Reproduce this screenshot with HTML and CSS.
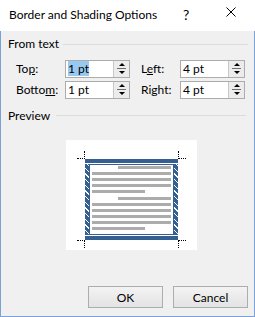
FILE: index.html
```html
<!doctype html>
<html lang="en">
  <head>
    <meta charset="UTF-8" />
    <title>Border and Shading Options</title>
    <link rel="stylesheet" href="styles.css">
  </head>
  <body>
    <div class="window">
      <div class="titlebar">
        <span class="title">Border and Shading Options</span>
        <span class="help">?</span>
        <svg class="close" width="10" height="10" viewBox="0 0 10 10">
          <path d="M0.5 0.5 L9.5 9.5 M9.5 0.5 L0.5 9.5" stroke="#000" stroke-width="1" />
        </svg>
      </div>
      <div class="content">
        <div class="group-head">
          <span>From text</span>
          <div class="rule"></div>
        </div>
        <div class="fields">
          <label class="lbl">To<u>p</u>:</label>
          <div class="spinbox">
            <span class="val"><span class="sel">1 pt</span></span>
            <div class="spin"><div class="up"></div><div class="sep"></div><div class="down"></div></div>
          </div>
          <label class="lbl lbl-right">L<u>e</u>ft:</label>
          <div class="spinbox">
            <span class="val">4 pt</span>
            <div class="spin"><div class="up"></div><div class="sep"></div><div class="down"></div></div>
          </div>
          <label class="lbl">Botto<u>m</u>:</label>
          <div class="spinbox">
            <span class="val">1 pt</span>
            <div class="spin"><div class="up"></div><div class="sep"></div><div class="down"></div></div>
          </div>
          <label class="lbl lbl-right">Ri<u>g</u>ht:</label>
          <div class="spinbox">
            <span class="val">4 pt</span>
            <div class="spin"><div class="up"></div><div class="sep"></div><div class="down"></div></div>
          </div>
        </div>
        <div class="group-head preview-head">
          <span>Preview</span>
          <div class="rule"></div>
        </div>
        <div class="preview">
          <div class="frame">
            <div class="mark tl"></div>
            <div class="mark tr"></div>
            <div class="mark bl"></div>
            <div class="mark br"></div>
            <div class="bar"></div>
            <div class="mid">
              <div class="hatch"></div>
              <div class="page">
                <div class="ln indent"></div>
                <div class="ln"></div>
                <div class="ln"></div>
                <div class="ln"></div>
                <div class="ln short"></div>
                <div class="ln indent para"></div>
                <div class="ln"></div>
                <div class="ln"></div>
                <div class="ln"></div>
                <div class="ln"></div>
                <div class="ln short"></div>
              </div>
              <div class="hatch"></div>
            </div>
            <div class="bar"></div>
          </div>
        </div>
        <div class="buttons">
          <button type="button" class="btn">OK</button>
          <button type="button" class="btn">Cancel</button>
        </div>
      </div>
    </div>
  </body>
</html>
```

FILE: styles.css
```css
body {
  margin: 0;
  font-family: Lato, "Liberation Sans", sans-serif;
  font-size: 12px;
  color: #000;
}
.window {
  width: 255px;
  height: 317px;
  display: flex;
  flex-direction: column;
}
.titlebar {
  height: 31px;
  background: #fff;
  display: flex;
  align-items: flex-start;
  padding-left: 9px;
}
.title {
  flex: 1;
  margin-top: 7px;
  line-height: 16px;
}
.help {
  width: 10px;
  margin-right: 33px;
  margin-top: 7px;
  font-size: 14px;
  line-height: 16px;
}
.close {
  margin-top: 7px;
  margin-right: 19px;
}
.content {
  flex: 1;
  background: #f0f0f0;
  border: 1px solid #7ba2d6;
  border-top: none;
  display: flex;
  flex-direction: column;
  padding: 0 6px 8px 7px;
}
.group-head {
  display: flex;
  margin-top: 5px;
  line-height: 16px;
}
.rule {
  flex: 1;
  height: 1px;
  margin-top: 8px;
  margin-left: 4px;
  background: #dcdcdc;
}
.preview-head {
  margin-top: 9px;
}
.preview-head .rule {
  margin-top: 7px;
  margin-left: 6px;
  margin-right: 2px;
}
.fields {
  display: grid;
  grid-template-columns: 49px 65px 50px 65px;
  grid-auto-rows: 18px;
  row-gap: 3px;
  margin-top: 8px;
  padding-left: 8px;
}
.lbl {
  line-height: 18px;
}
.lbl-right {
  padding-left: 11px;
}
.spinbox {
  display: flex;
  border: 1px solid #acacac;
  background: #fff;
}
.val {
  flex: 1;
  line-height: 16px;
  padding-left: 2px;
}
.sel {
  background: #99c9ef;
}
.spin {
  width: 15px;
  border-left: 1px solid #c8c8c8;
  background: #ececec;
  display: flex;
  flex-direction: column;
  align-items: center;
}
.up, .down {
  width: 0;
  height: 0;
  border-left: 3px solid transparent;
  border-right: 3px solid transparent;
}
.up {
  margin-top: 2px;
  border-bottom: 3px solid #000;
}
.sep {
  width: 9px;
  height: 1px;
  margin: 2px 0;
  background: #6d6d6d;
}
.down {
  border-top: 3px solid #000;
}
.preview {
  width: 131px;
  height: 110px;
  margin-top: 16px;
  margin-left: 58px;
  background: #fff;
  box-sizing: border-box;
  padding: 19px;
}
.frame {
  position: relative;
  width: 93px;
  height: 81px;
  display: flex;
  flex-direction: column;
}
.bar {
  height: 4px;
  background: #355f91;
}
.mid {
  height: 73px;
  display: flex;
  align-items: center;
}
.hatch {
  width: 4px;
  height: 71px;
  background: repeating-linear-gradient(45deg, #355f91 0, #355f91 3px, #fff 3px, #fff 4px);
}
.page {
  flex: 1;
  height: 71px;
  box-sizing: border-box;
  border: 1px solid #355f91;
  padding: 1px 2px;
}
.ln {
  height: 3px;
  margin-bottom: 3px;
  background: #acacac;
}
.indent {
  margin-left: 26px;
}
.para {
  margin-top: 4px;
}
.short {
  width: 53px;
}
.mark {
  position: absolute;
  width: 7px;
  height: 7px;
}
.tl {
  top: -8px;
  left: -8px;
  border-right: 1px dotted #000;
  border-bottom: 1px dotted #000;
}
.tr {
  top: -8px;
  left: 93px;
  border-left: 1px dotted #000;
  border-bottom: 1px dotted #000;
}
.bl {
  top: 81px;
  left: -8px;
  border-right: 1px dotted #000;
  border-top: 1px dotted #000;
}
.br {
  top: 81px;
  left: 93px;
  border-left: 1px dotted #000;
  border-top: 1px dotted #000;
}
.buttons {
  margin-top: auto;
  display: flex;
  justify-content: flex-end;
  gap: 10px;
}
.btn {
  width: 75px;
  height: 22px;
  border: 1px solid #adadad;
  background: linear-gradient(#f3f3f3, #e3e3e3);
  font-family: Lato, "Liberation Sans", sans-serif;
  font-size: 12px;
  color: #000;
  padding: 0;
}
```
